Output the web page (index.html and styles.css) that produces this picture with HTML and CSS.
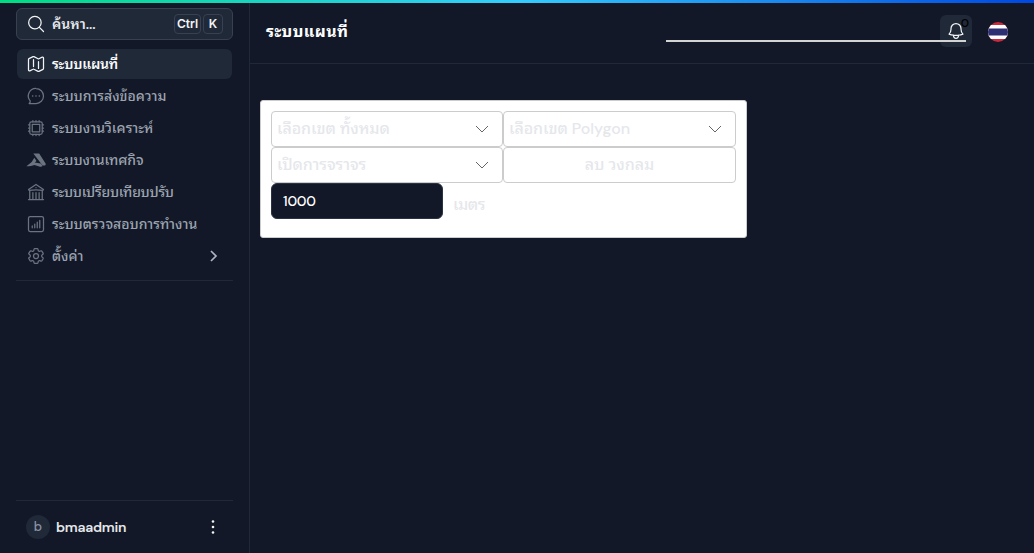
FILE: index.html
```html
<!DOCTYPE html>
<html lang="th">
<head>
<meta charset="utf-8">
<title>ระบบแผนที่</title>
<link rel="stylesheet" href="styles.css">
</head>
<body>
<div class="progress"></div>
<div class="app">
  <aside class="sidebar">
    <button class="search">
      <svg class="icon bright" viewBox="0 0 24 24"><path d="m21 21-5.2-5.2m0 0A7.5 7.5 0 1 0 5.2 5.2a7.5 7.5 0 0 0 10.6 10.6z"/></svg>
      <span class="label t-search">ค้นหา...</span>
      <kbd class="ctrl">Ctrl</kbd><kbd>K</kbd>
    </button>
    <nav class="menu">
      <a class="item active"><svg class="icon bright" viewBox="0 0 24 24"><path d="M9 6.75V15m6-6v8.25m.5 3.6 4.9-2.4c.4-.2.6-.6.6-1V4.8c0-.8-.9-1.400-1.600-1L15.500 5.700c-.3.200-.7.200-1 0l-5-2.500a1.100 1.100 0 0 0-1 0L3.600 5.600c-.4.200-.6.600-.6 1v12.600c0 .8.900 1.400 1.600 1l3.900-1.900c.3-.2.700-.2 1 0l5 2.500c.3.200.7.200 1 0z"/></svg><span class="label t-map">ระบบแผนที่</span></a>
      <a class="item"><svg class="icon" viewBox="0 0 24 24"><path d="M12 3a9 9 0 1 1 0 18H3.800c1.200-1 1.500-2 1.200-3.100A9 9 0 0 1 12 3z"/><path class="dots" d="M8 12h.01M12 12h.01M16 12h.01"/></svg><span class="label t-message">ระบบการส่งข้อความ</span></a>
      <a class="item"><svg class="icon" viewBox="0 0 24 24"><rect x="4.500" y="4.500" width="15" height="15" rx="2.200"/><path d="M7.500 7.500h9v9h-9zM8.250 3v1.500M12 3v1.500M15.750 3v1.500M8.250 19.500V21M12 19.500V21M15.750 19.500V21M3 8.250h1.500M3 12h1.500M3 15.750h1.500M19.500 8.250H21M19.500 12H21M19.500 15.750H21"/></svg><span class="label t-analysis">ระบบงานวิเคราะห์</span></a>
      <a class="item"><svg class="icon logo" viewBox="0 0 20 20"><path d="M7.300 3.500h5.900l6.200 9.800c.8 1.300.1 2.300-1.300 2.300-1.100 0-1.700-.3-2.300-1.200z"/><path d="M8.300 7.700 10.500 11l-1.800 1.500 6.100.9 1.900 2.700c-1.100.6-2.200.7-3.500.3l-4.700-1.500C6.200 15.700 3.800 16.200.4 16.200l5.300-4.100z"/></svg><span class="label t-city">ระบบงานเทศกิจ</span></a>
      <a class="item"><svg class="icon" viewBox="0 0 24 24"><path d="M3 21h18M4.500 21V10.300M19.500 21V10.300M8.250 21v-8.250M12 21v-8.250M15.750 21v-8.250M3 9l9-6 9 6M3.700 10.100a50 50 0 0 1 16.600 0M12 6.750h.01"/></svg><span class="label t-fine">ระบบเปรียบเทียบปรับ</span></a>
      <a class="item"><svg class="icon" viewBox="0 0 24 24"><rect x="3" y="3" width="18" height="18" rx="2"/><path d="M7.500 14.250v2.250M10.500 12v4.500M13.500 9.750v6.750M16.500 7.500v9"/></svg><span class="label t-check">ระบบตรวจสอบการทำงาน</span></a>
      <a class="item"><svg class="icon" viewBox="0 0 24 24"><path d="M9.600 3.900c.1-.5.600-.9 1.100-.9h2.600c.5 0 1 .4 1.100.9l.2 1.300c.1.400.3.700.6.900l.3.100c.3.200.7.300 1.100.1l1.200-.4c.5-.2 1.100 0 1.400.5l1.300 2.200c.3.500.2 1.100-.3 1.400l-1 .9c-.300.200-.400.600-.400 1v.2c0 .4.100.7.400 1l1 .8c.4.400.5 1 .3 1.400l-1.300 2.300c-.300.500-.9.700-1.400.5l-1.200-.5c-.4-.1-.8-.1-1.100.1l-.3.200c-.3.200-.5.500-.6.900l-.2 1.300c-.1.500-.6.900-1.100.9h-2.600c-.5 0-1-.4-1.100-.9l-.2-1.300c-.1-.4-.3-.7-.6-.9l-.3-.2c-.3-.2-.7-.2-1.100-.1l-1.200.5c-.5.200-1.100 0-1.400-.5l-1.300-2.300c-.3-.4-.2-1 .3-1.400l1-.8c.3-.3.4-.6.4-1v-.2c0-.4-.1-.8-.4-1l-1-.9c-.5-.3-.6-.9-.3-1.400l1.300-2.200c.3-.5.900-.7 1.400-.5l1.200.4c.4.200.8.100 1.100-.1l.3-.1c.3-.2.5-.5.600-.9z"/><circle cx="12" cy="12" r="3"/></svg><span class="label t-settings">ตั้งค่า</span><svg class="next" viewBox="0 0 20 20"><path d="m8 5 5 5-5 5"/></svg></a>
    </nav>
    <div class="rule"></div>
    <footer class="user"><span class="avatar">b</span><span class="username">bmaadmin</span><svg class="more" viewBox="0 0 20 20"><circle cx="10" cy="4.500" r="1.300"/><circle cx="10" cy="10" r="1.300"/><circle cx="10" cy="15.500" r="1.300"/></svg></footer>
  </aside>
  <main class="content">
    <header class="topbar">
      <h1><span class="t-title">ระบบแผนที่</span></h1>
      <button class="bell"><svg class="icon bright" viewBox="0 0 24 24"><path d="M14.900 17.100a24 24 0 0 0 5.400-1.300A9 9 0 0 1 18 9.750V9A6 6 0 0 0 6 9v.75a9 9 0 0 1-2.300 6c1.700.7 3.500 1.100 5.400 1.300m5.800 0a24 24 0 0 1-5.800 0m5.800 0a3 3 0 1 1-5.800 0"/></svg><span class="count">0</span></button>
      <span class="underline"></span>
      <svg class="flag" viewBox="0 0 20 20"><defs><clipPath id="round"><circle cx="10" cy="10" r="10"/></clipPath></defs><g clip-path="url(#round)"><path fill="#c92a3c" d="M0 0h20v20H0z"/><path fill="#fff" d="M0 3h20v14H0z"/><path fill="#2d2f73" d="M0 6.400h20v7.200H0z"/></g></svg>
    </header>
    <section class="panel">
      <div class="fields">
        <div class="field"><span class="t-zone">เลือกเขต ทั้งหมด</span><svg class="chevron" viewBox="0 0 14 8"><path d="m1 1 6 6 6-6"/></svg></div>
        <div class="field"><span class="t-polygon">เลือกเขต Polygon</span><svg class="chevron" viewBox="0 0 14 8"><path d="m1 1 6 6 6-6"/></svg></div>
        <div class="field"><span class="t-traffic">เปิดการจราจร</span><svg class="chevron" viewBox="0 0 14 8"><path d="m1 1 6 6 6-6"/></svg></div>
        <button class="field clear"><span class="t-clear">ลบ วงกลม</span></button>
      </div>
      <div class="radius"><input class="distance" value="1000"><span class="unit"><span class="t-unit">เมตร</span></span></div>
    </section>
  </main>
</div>
</body>
</html>
```
FILE: styles.css
```css
* { box-sizing: border-box; }
body { margin: 0; height: 553px; overflow: hidden; background: #121827; color: #e5e7eb; font-family: "DM Sans", "Noto Sans Thai Looped", Loma, Waree, Garuda, Sarabun, "IBM Plex Sans Thai Looped", Tahoma, sans-serif; font-size: 14px; }
button, input { font: inherit; color: inherit; }
.progress { position: absolute; inset: 0 0 auto; height: 3px; background: linear-gradient(to right, #00dc82 0%, #34cdfe 50%, #0047e1 100%); }
.app { display: flex; height: 553px; }
.sidebar { width: 250px; flex: none; border-right: 1px solid #1f2937; padding: 8px 16px 0; display: flex; flex-direction: column; }
.search { width: 217px; height: 32px; display: flex; align-items: center; padding: 0 9px; border: 1px solid #374151; border-radius: 6px; background: #202938; gap: 2px; }
.icon { width: 20px; height: 20px; flex: none; fill: none; stroke: #6b7280; stroke-width: 1.5; stroke-linecap: round; stroke-linejoin: round; }
.bright { stroke: #f3f4f6; }
.dots { stroke-width: 2; }
.logo { fill: #6b7280; stroke: none; }
.label { white-space: nowrap; line-height: 20px; font-weight: 500; margin-left: 6px; }
.search .label { margin: 0 auto 0 4px; font-weight: 600; }
kbd { font: 600 12px/18px Inter, sans-serif; height: 20px; width: 20px; text-align: center; border: 1px solid #374151; border-radius: 4px; color: #f3f4f6; }
kbd.ctrl { width: 27px; }
.menu { display: flex; flex-direction: column; gap: 2px; margin-top: 9px; }
.item { width: 215px; margin-left: 1px; height: 30px; display: flex; align-items: center; padding: 0 9px; border-radius: 6px; color: #9ca3af; }
.active { background: #202938; color: #f9fafb; }
.active .label { font-weight: 600; }
.t-map { letter-spacing: -.25px; }
.t-city { letter-spacing: -.07px; }
.t-fine { letter-spacing: -.25px; }
.t-title { letter-spacing: .4px; }
.t-zone, .t-polygon, .t-traffic { letter-spacing: -.08px; }
.t-unit { letter-spacing: -.5px; }
.next { width: 20px; height: 20px; margin-left: auto; fill: none; stroke: #aeb4c0; stroke-width: 1.7; }
.rule { height: 1px; width: 217px; margin-top: 9px; background: #1f2937; }
.user { margin-top: auto; width: 217px; height: 53px; border-top: 1px solid #1f2937; display: flex; align-items: center; padding: 0 10px; }
.avatar { width: 24px; height: 24px; border-radius: 50%; background: #202938; color: #8b94a3; text-align: center; font-size: 13px; line-height: 24px; font-weight: 500; }
.username { margin-left: 6px; font-weight: 600; letter-spacing: -.25px; }
.more { width: 20px; height: 20px; margin-left: auto; fill: #f3f4f6; }
.content { flex: 1; min-width: 0; }
.topbar { position: relative; height: 64px; border-bottom: 1px solid #1f2937; padding: 0 26px 0 16px; display: flex; align-items: center; }
h1 { margin: 0; font-size: 16px; line-height: 24px; color: #fff; font-weight: 700; white-space: nowrap; }
.bell { position: relative; width: 32px; height: 32px; margin: -2px 16px 0 auto; padding: 6px; border: 0; border-radius: 6px; background: #202938; }
.bell .icon { display: block; }
.count { position: absolute; right: 3px; top: 1px; font-size: 12px; line-height: 15px; color: #000; font-weight: 500; }
.underline { position: absolute; left: 416px; top: 40px; width: 300px; height: 2px; background: #d3d3d3; }
.flag { width: 20px; height: 20px; }
.panel { width: 487px; height: 138px; margin: 36px 0 0 10px; padding: 10px; border: 1px solid #ccc; border-radius: 3px; background: #fff; color: #e5e7eb; }
.fields { display: grid; grid-template-columns: 232px 233px; grid-auto-rows: 36px; }
.field { border: 1px solid #ccc; border-radius: 4px; background: #fff; padding: 0 13px 0 5px; display: flex; align-items: center; justify-content: space-between; font-size: 16px; font-weight: 500; white-space: nowrap; line-height: 24px; }
.clear { justify-content: center; padding: 0; }
.chevron { width: 14px; height: 8px; fill: none; stroke: #666; stroke-width: 1; }
.radius { display: flex; }
.distance { width: 172px; height: 36px; padding: 0 11px; border: 1px solid #283344; border-radius: 6px; background: #121827; color: #fff; font-size: 14px; font-weight: 500; letter-spacing: -.2px; }
.unit { font-size: 16px; font-weight: 500; line-height: 24px; margin: 10px 0 0 10px; }
```
